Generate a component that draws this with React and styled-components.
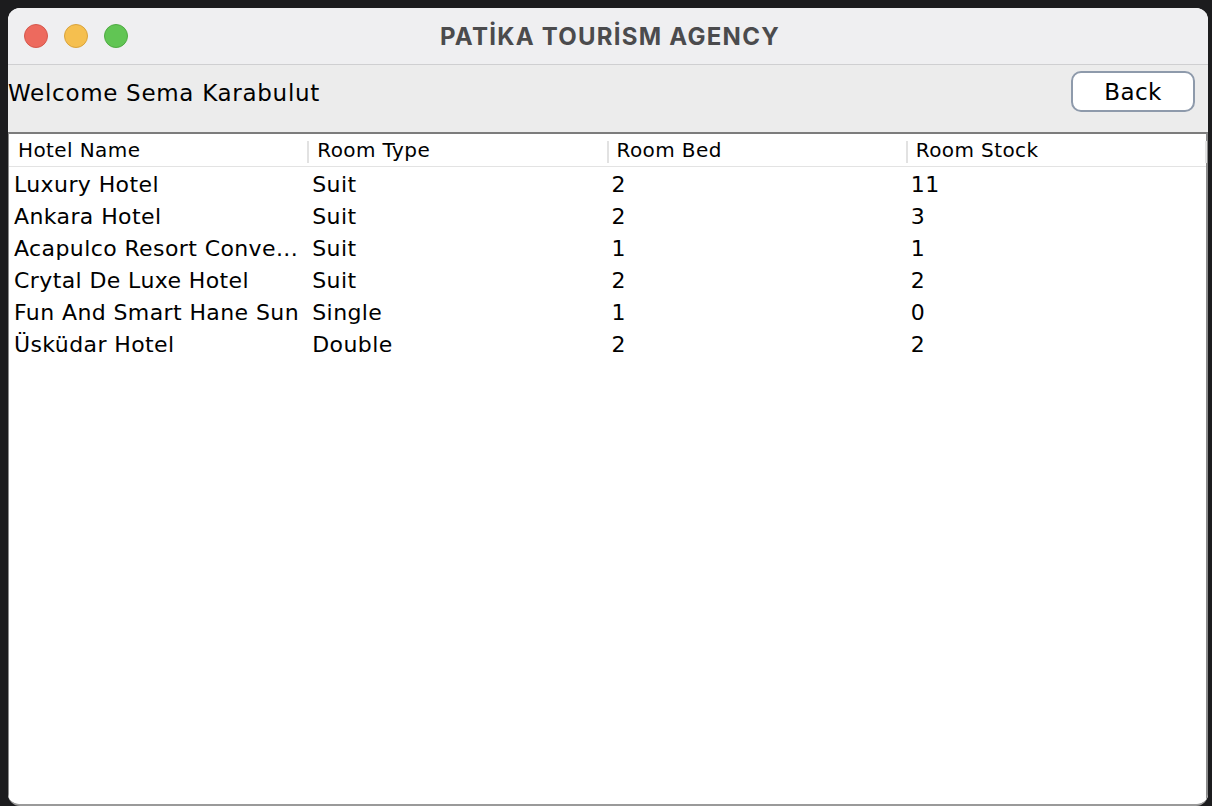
import React from 'react';
import styled, { createGlobalStyle } from 'styled-components';

const rooms = [
  { id: 1, hotel: 'Luxury Hotel', type: 'Suit', bed: 2, stock: 11 },
  { id: 2, hotel: 'Ankara Hotel', type: 'Suit', bed: 2, stock: 3 },
  { id: 3, hotel: 'Acapulco Resort Conve...', type: 'Suit', bed: 1, stock: 1 },
  { id: 4, hotel: 'Crytal De Luxe Hotel', type: 'Suit', bed: 2, stock: 2 },
  { id: 5, hotel: 'Fun And Smart Hane Sun', type: 'Single', bed: 1, stock: 0 },
  { id: 6, hotel: 'Üsküdar Hotel', type: 'Double', bed: 2, stock: 2 },
];

const columns = ['Hotel Name', 'Room Type', 'Room Bed', 'Room Stock'];

const GlobalStyle = createGlobalStyle`
  html, body {
    margin: 0;
    padding: 0;
    background: #1c1c1e;
  }
  * {
    box-sizing: border-box;
  }
`;

const Desktop = styled.div`
  width: 1212px;
  height: 806px;
  padding: 8px 4px 0 8px;
  background: #1c1c1e;
  overflow: hidden;
  font-family: 'DejaVu Sans', 'Liberation Sans', sans-serif;
`;

const Window = styled.section`
  width: 1200px;
  height: 798px;
  display: flex;
  flex-direction: column;
  background: #fff;
  border-radius: 12px;
  overflow: hidden;
  border-bottom: 2px solid #9a9a9a;
`;

const TitleBar = styled.header`
  height: 57px;
  flex-shrink: 0;
  display: grid;
  grid-template-columns: 1fr auto 1fr;
  align-items: center;
  padding: 0 16px;
  background: #efeff1;
  border-bottom: 1px solid #cfcfd1;
`;

const Lights = styled.div`
  display: flex;
  gap: 16px;
  margin-top: -1px;
`;

const Light = styled.span`
  width: 24px;
  height: 24px;
  border-radius: 50%;
  background: ${props => props.color};
  border: 1px solid ${props => props.edge};
`;

const Title = styled.h1`
  margin: 0 0 0 4px;
  font-family: 'Inter', 'Liberation Sans', sans-serif;
  font-size: 24px;
  font-weight: 700;
  letter-spacing: 1.25px;
  color: #4b4b4d;
`;

const Toolbar = styled.div`
  height: 67px;
  flex-shrink: 0;
  display: flex;
  justify-content: space-between;
  align-items: flex-start;
  padding: 6px 13px 0 0;
  background: #ececec;
`;

const Welcome = styled.span`
  line-height: 44px;
  font-size: 23px;
  letter-spacing: 0.7px;
  color: #000;
`;

const BackButton = styled.button`
  width: 124px;
  height: 41px;
  padding: 0;
  border: 2px solid #8e9aab;
  border-radius: 10px;
  background: #fff;
  font-family: inherit;
  font-size: 23px;
  letter-spacing: 0.4px;
  color: #000;
`;

const TableFrame = styled.div`
  flex: 1;
  display: flex;
  flex-direction: column;
  background: #fff;
  border-top: 2px solid #7c7c7c;
  border-left: 1px solid #8c8c8c;
  border-right: 2px solid #8c8c8c;
`;

const HeaderRow = styled.div`
  height: 33px;
  display: grid;
  grid-template-columns: repeat(4, 1fr);
  border-bottom: 1px solid #e3e3e3;
  margin-bottom: 1px;
`;

const HeaderCell = styled.div`
  position: relative;
  padding-left: 9px;
  line-height: 33px;
  font-size: 20px;
  letter-spacing: 0.4px;
  color: #000;

  &::after {
    content: '';
    position: absolute;
    right: -1px;
    top: 7px;
    bottom: 4px;
    width: 2px;
    background: #e2e2e2;
  }
`;

const Row = styled.div`
  height: 32px;
  display: grid;
  grid-template-columns: repeat(4, 1fr);
  align-items: center;
`;

const Cell = styled.div`
  padding-left: 4px;
  font-size: 22px;
  letter-spacing: 0.4px;
  color: #000;
  white-space: nowrap;
  overflow: hidden;
  text-overflow: ellipsis;

  &:first-child {
    padding-left: 5px;
  }
`;

const App = () => (
  <Desktop>
    <GlobalStyle />
    <Window>
      <TitleBar>
        <Lights>
          <Light color="#ed6a5e" edge="#d5584d" />
          <Light color="#f5bf4f" edge="#d9a33c" />
          <Light color="#61c554" edge="#4fab43" />
        </Lights>
        <Title>PATİKA TOURİSM AGENCY</Title>
        <span />
      </TitleBar>

      <Toolbar>
        <Welcome>Welcome Sema Karabulut</Welcome>
        <BackButton>Back</BackButton>
      </Toolbar>

      <TableFrame>
        <HeaderRow>
          {columns.map((name) =>
            <HeaderCell key={name}>{name}</HeaderCell>
          )}
        </HeaderRow>
        {rooms.map((room) =>
          <Row key={room.id}>
            <Cell>{room.hotel}</Cell>
            <Cell>{room.type}</Cell>
            <Cell>{room.bed}</Cell>
            <Cell>{room.stock}</Cell>
          </Row>
        )}
      </TableFrame>
    </Window>
  </Desktop>
);

export default App;
